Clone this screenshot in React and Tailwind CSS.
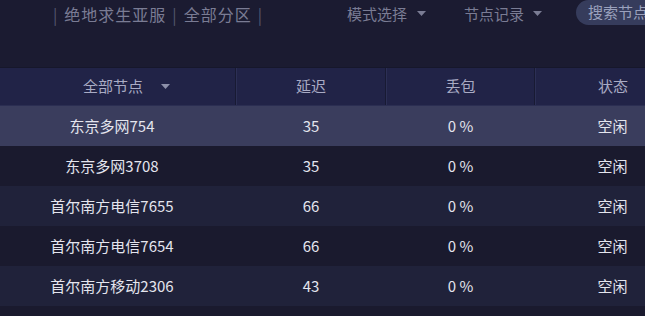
import { useState } from 'react'

const ROWS = [
  { name: '东京多网754', delay: 35, loss: '0 %', status: '空闲' },
  { name: '东京多网3708', delay: 35, loss: '0 %', status: '空闲' },
  { name: '首尔南方电信7655', delay: 66, loss: '0 %', status: '空闲' },
  { name: '首尔南方电信7654', delay: 66, loss: '0 %', status: '空闲' },
  { name: '首尔南方移动2306', delay: 43, loss: '0 %', status: '空闲' },
  { name: '首尔南方移动2305', delay: 43, loss: '0 %', status: '空闲' },
]

const font = { fontFamily: '"Noto Sans CJK SC", "Liberation Sans", sans-serif' }

// small down triangle
function Caret({ className = '' }) {
  return (
    <svg width="9" height="6" viewBox="0 0 9 6" className={`shrink-0 ${className}`}>
      <path d="M0 0 L9 0 L4.5 5 Z" fill="currentColor" />
    </svg>
  )
}

function TopBar() {
  return (
    <div className="h-[67px] bg-[#1b1b31] flex items-start whitespace-nowrap text-[#7a7c94]">
      <div className="ml-[53px] mt-[2px] shrink-0 flex items-center gap-[6px] text-[16px] tracking-[1px]">
        <span className="text-[#55586f]">|</span>
        <span>绝地求生亚服</span>
        <span className="text-[#55586f]">|</span>
        <span>全部分区</span>
        <span className="text-[#55586f]">|</span>
      </div>
      <div className="ml-[84px] mt-[3px] shrink-0 flex items-center gap-[10px] text-[15px]">
        <span>模式选择</span>
        <Caret className="text-[#7a7c94]" />
      </div>
      <div className="ml-[38px] mt-[3px] shrink-0 flex items-center gap-[9px] text-[15px]">
        <span>节点记录</span>
        <Caret className="text-[#7a7c94]" />
      </div>
      <div className="ml-[34px] h-[25px] w-[120px] shrink-0 rounded-full bg-[#363c5c] flex items-center pl-[12px] text-[15px] text-[#9aa1bd]">
        搜索节点
      </div>
    </div>
  )
}

const COLS = ['w-[236px]', 'w-[150px]', 'w-[149px]', 'w-[155px]']

function HeaderRow() {
  return (
    <div className="flex h-[39px] whitespace-nowrap bg-[#212347] border-t border-[#16172b] border-b border-b-[#2b2e52] text-[15px] text-[#a9abc4]">
      <div className={`${COLS[0]} shrink-0 flex items-center justify-center gap-[18px] pl-[18px] border-r border-[#181a33]`}>
        <span>全部节点</span>
        <Caret className="text-[#8d90aa]" />
      </div>
      <div className={`${COLS[1]} shrink-0 flex items-center justify-center border-l border-[#2c2f55] border-r border-r-[#181a33]`}>延迟</div>
      <div className={`${COLS[2]} shrink-0 flex items-center justify-center border-l border-[#2c2f55] border-r border-r-[#181a33]`}>丢包</div>
      <div className={`${COLS[3]} shrink-0 flex items-center justify-center border-l border-[#2c2f55]`}>状态</div>
    </div>
  )
}

export default function App() {
  const [sel, setSel] = useState(0)
  return (
    <div className="w-[645px] h-[316px] overflow-hidden bg-[#1a1a2e]" style={font}>
      <TopBar />
      <HeaderRow />
      {ROWS.map((r, i) => (
        <div
          key={r.name}
          onClick={() => setSel(i)}
          className={`flex h-[40px] items-center whitespace-nowrap text-[15px] text-[#e4e5ee] ${
            i === sel ? 'bg-[#3a3d5d]' : i % 2 === 1 ? 'bg-[#1a1a2e]' : 'bg-[#20223a]'
          }`}
        >
          <div className={`${COLS[0]} shrink-0 text-center pr-[12px]`}>{r.name}</div>
          <div className={`${COLS[1]} shrink-0 text-center`}>{r.delay}</div>
          <div className={`${COLS[2]} shrink-0 text-center`}>{r.loss}</div>
          <div className={`${COLS[3]} shrink-0 text-center`}>{r.status}</div>
        </div>
      ))}
    </div>
  )
}
